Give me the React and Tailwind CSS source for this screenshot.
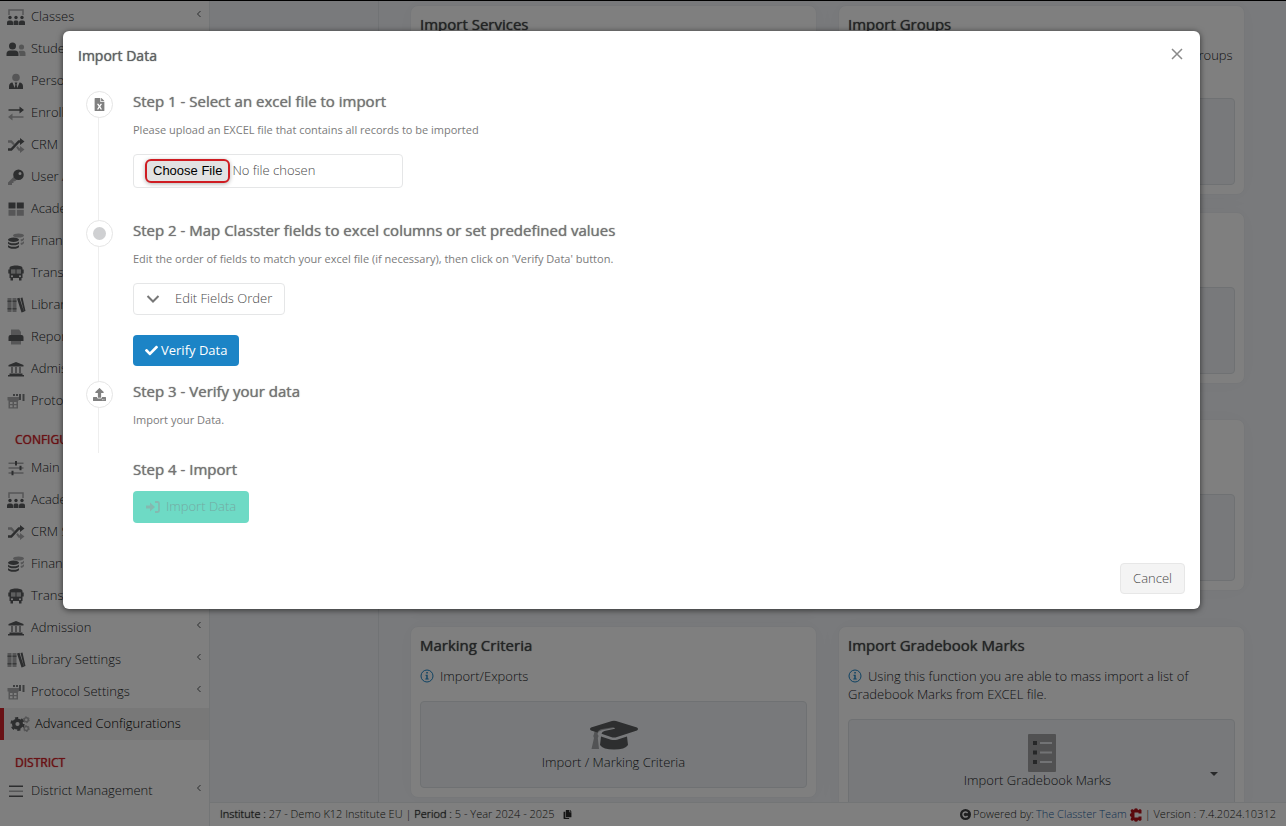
import React, { useState } from 'react';
import { FaCheck, FaCopy, FaFileExcel, FaUpload } from 'react-icons/fa';

// two-tone sidebar icons, the lighter tone is drawn with opacity
const ICONS = {
    classes: (
        <>
            <path d="M3 6V1h14v5" fill="none" stroke="currentColor" strokeWidth="1.5" opacity="0.5" />
            <circle cx="4" cy="8.500" r="1.700" />
            <circle cx="10" cy="8.500" r="1.700" />
            <circle cx="16" cy="8.500" r="1.700" />
            <path d="M1 16v-2.500q0-2 2-2h2q2 0 2 2V16zM7.500 16v-2.500q0-2 1.500-2h2q1.500 0 1.500 2V16zM13 16v-2.500q0-2 2-2h2q2 0 2 2V16z" />
        </>
    ),
    students: (
        <>
            <circle cx="6.500" cy="5" r="3.500" />
            <path d="M0.500 15v-2q0-3.500 3.500-3.500h5q3.500 0 3.500 3.500v2z" />
            <g opacity="0.5">
                <circle cx="15.500" cy="6" r="2.600" />
                <path d="M13.500 15v-2q0-1.500-1-2.500q.500-.700 1.500-.700h3q2.500 0 2.500 2.700v2.500z" />
            </g>
        </>
    ),
    personnel: (
        <>
            <circle cx="10" cy="4.500" r="3.800" opacity="0.5" />
            <path d="M3 16v-2.500Q3 9.800 6.500 9.500l2.200 5.500L9.400 11.500 8.600 9.500h2.800l-.8 2 .7 3.500 2.200-5.500Q17 9.800 17 13.500V16z" />
        </>
    ),
    enroll: (
        <>
            <path d="M2.500 4.200h11V1.500L18 5l-4.500 3.500V5.800h-11z" />
            <path d="M17.500 11.200h-11V8.500L2 12l4.500 3.500v-2.700h11z" opacity="0.5" />
        </>
    ),
    crm: (
        <>
            <path d="M2 11.300h2.800l7.500-8H14V1l4.500 3.500L14 8V5.800h-.700l-7.500 8H2z" />
            <path d="M2 3.300h3.800l3 3.400-1.400 1.500-2.600-2.500H2zM10.200 10.500l1.300-1.500 2 2.300h.500V9l4.500 3.500L14 16v-2.300h-1.400z" opacity="0.5" />
        </>
    ),
    key: (
        <>
            <path d="M2 13.500 8 7.500l3 3-2 1.800H7.500V14H6v2H2z" opacity="0.5" />
            <path fillRule="evenodd" d="M12.500.500a5.300 5.300 0 1 1 0 10.600 5.300 5.300 0 0 1 0-10.600zm1.500 2.500a1.500 1.500 0 1 0 0 3 1.500 1.500 0 0 0 0-3z" />
        </>
    ),
    blocks: (
        <>
            <path d="M2.500 1.500h7v6h-7zM10.800 1.500h7v6h-7z" />
            <path d="M2.500 8.800h7v6h-7zM10.800 8.800h7v6h-7z" opacity="0.5" />
        </>
    ),
    coins: (
        <>
            <ellipse cx="12.500" cy="2.500" rx="5.500" ry="2" opacity="0.5" />
            <path d="M14.500 6.500q3-.500 3.500-2v2q-.500 1.500-3 2zM14.500 10q3-.500 3.500-2v2q-.500 1.500-3 2z" opacity="0.5" />
            <ellipse cx="7.500" cy="6.800" rx="5.500" ry="2.200" />
            <path d="M2 8.500q1 1.800 5.500 1.800T13 8.500v2q-1 1.800-5.500 1.800T2 10.500zM2 12q1 1.800 5.500 1.800T13 12v2q-1 1.800-5.500 1.800T2 14z" />
        </>
    ),
    bus: (
        <>
            <path fillRule="evenodd" d="M10 .500c4 0 6.500 1 6.500 2.500v1.500h1.200v4h-1.200V13H3.500V8.500H2.300v-4h1.200V3C3.500 1.500 6 .500 10 .500zM5 4.500v4h4.500v-4zm5.500 0v4H15v-4zM6 10.200a1 1 0 1 0 0 2 1 1 0 0 0 0-2zm8 0a1 1 0 1 0 0 2 1 1 0 0 0 0-2z" />
            <path d="M5 4.500h10v4H5z" opacity="0.4" />
            <path d="M4.500 13h2.500v2.500H4.500zM13 13h2.500v2.500H13z" />
        </>
    ),
    books: (
        <>
            <path d="M1.500 1h4v14h-4zM6.500 1h4v14h-4z" opacity="0.5" />
            <path d="M1.500 3.500h4V5h-4zM1.500 11h4v1.500h-4zM6.500 3.500h4V5h-4zM6.500 11h4v1.500h-4z" opacity="0.7" />
            <path d="m11 1.500 2.500-.700 4.500 14-2.500.700zM14.500 1l2-.500L19.500 14l-1.500.500z" />
        </>
    ),
    printer: (
        <>
            <path d="M5 0.500h8L15 3v3H5zM5 11h10v4.500H5z" opacity="0.5" />
            <path d="M2.500 8q0-2 2-2h11q2 0 2 2v4h-15z" />
        </>
    ),
    bank: (
        <>
            <path d="M10 1 17.500 4v1.500h-15V4zM2 14h16v1.500H2zM3.500 12.500h13V14h-13z" />
            <path d="M5 6h2v6H5zM9 6h2v6H9zM13 6h2v6h-2z" opacity="0.6" />
        </>
    ),
    protocol: (
        <>
            <path fillRule="evenodd" d="M1.500 4h11.500v3.500H12V15.500H2.500V7.500h-1zM4 9v2h2.500V9zm4 0v2h2.500V9zM4 12.200v2h2.500v-2zm4 0v2h2.500v-2z" opacity="0.5" />
            <path d="M7 1h2v2H7zM10 1h2v2h-2zM13 1h2v6h-2zM16.500 1h2v7h-2z" opacity="0.8" />
        </>
    ),
    sliders: (
        <>
            <path d="M2.500 2.500h15V4h-15zM2.500 7.300h15v1.500h-15zM2.500 12.200h15v1.500h-15z" opacity="0.5" />
            <path d="M9 1h2v4.500H9zM13.500 5.800h2v4.500h-2zM5.500 10.700h2v4.500h-2z" />
        </>
    ),
    bars: (
        <>
            <path d="M3 2.500h14V4H3zM3 12.500h14V14H3z" />
            <path d="M3 7.500h14V9H3z" opacity="0.5" />
        </>
    ),
    cogs: (
        <>
            <circle cx="7.500" cy="8" r="3.800" fill="none" stroke="currentColor" strokeWidth="3.400" />
            <circle cx="7.500" cy="8" r="6" fill="none" stroke="currentColor" strokeWidth="2.200" strokeDasharray="3.100 3.180" />
            <g fill="none" stroke="currentColor" opacity="0.5">
                <circle cx="16.300" cy="3.800" r="2" strokeWidth="1.400" />
                <circle cx="16.300" cy="12.500" r="2" strokeWidth="1.400" />
                <circle cx="16.300" cy="3.800" r="3" strokeWidth="1" strokeDasharray="1.570 1.570" />
                <circle cx="16.300" cy="12.500" r="3" strokeWidth="1" strokeDasharray="1.570 1.570" />
            </g>
        </>
    ),
};

const menu = [
    {
        items: [
            ['classes', 'Classes'],
            ['students', 'Students'],
            ['personnel', 'Personnel'],
            ['enroll', 'Enrollment'],
            ['crm', 'CRM'],
            ['key', 'User Accounts'],
            ['blocks', 'Academic'],
            ['coins', 'Financial'],
            ['bus', 'Transportation'],
            ['books', 'Library'],
            ['printer', 'Reports'],
            ['bank', 'Admission'],
            ['protocol', 'Protocol'],
        ],
    },
    {
        title: 'CONFIGURATION',
        items: [
            ['sliders', 'Main Settings'],
            ['classes', 'Academic Settings'],
            ['crm', 'CRM Settings'],
            ['coins', 'Financial Settings'],
            ['bus', 'Transportation'],
            ['bank', 'Admission'],
            ['books', 'Library Settings'],
            ['protocol', 'Protocol Settings'],
            ['cogs', 'Advanced Configurations'],
        ],
    },
    {
        title: 'DISTRICT',
        items: [['bars', 'District Management']],
    },
];

const cards = [
    { title: 'Import Services', text: 'Using this function you are able to mass import a list of services from EXCEL file.', label: 'Import Services' },
    { title: 'Import Groups', text: 'Using this function you are able to mass import a list of groups from EXCEL file.', label: 'Import Groups' },
    { title: 'Import Subjects', text: 'Using this function you are able to mass import a list of Subjects from EXCEL file.', label: 'Import Subjects' },
    { title: 'Rubrics', text: 'Import/Exports', label: 'Import / Rubrics' },
    { title: 'Import Candidates', text: 'Using this function you are able to mass import a list of Candidates from EXCEL file.', label: 'Import Candidates' },
    { title: 'Marking Scales', text: 'Import/Exports', label: 'Import / Marking Scales' },
    { title: 'Marking Criteria', text: 'Import/Exports', label: 'Import / Marking Criteria', icon: 'cap' },
    { title: 'Import Gradebook Marks', text: 'Using this function you are able to mass import a list of Gradebook Marks from EXCEL file.', label: 'Import Gradebook Marks', dropdown: true },
];

function Sidebar() {
    return (
        <nav className="w-[210px] shrink-0 overflow-hidden border-r border-[#e7eaec] bg-white pt-px">
            {menu.map((group, i) => (
                <div key={i}>
                    {group.title && (
                        <h2 className="pt-[11px] pl-[15px] text-xs leading-6 font-normal text-[#d2232a] [text-shadow:0_0_1px_currentColor]">{group.title}</h2>
                    )}
                    <ul>
                        {group.items.map(([icon, label]) => {
                            const active = icon === 'cogs';
                            return (
                                <li key={label}>
                                    <a
                                        href="#"
                                        className={`flex h-8 items-center gap-[5px] pl-[6px] pr-[7px] whitespace-nowrap ${
                                            active ? 'border-l-4 border-[#d2232a] bg-[#f0f0f0] text-black' : 'text-[#242628]'
                                        }`}
                                    >
                                        <svg viewBox="0 0 20 16" className="h-4 w-5 shrink-0 fill-current text-[#5a5c5e]">{ICONS[icon]}</svg>
                                        <span className="flex-1">{label}</span>
                                        {!active && (
                                            <svg viewBox="0 0 6 8" className="mb-[6px] h-2 w-[6px] fill-none stroke-[#56595b]">
                                                <path d="M4.500 1 1.500 4l3 3" />
                                            </svg>
                                        )}
                                    </a>
                                </li>
                            );
                        })}
                    </ul>
                </div>
            ))}
        </nav>
    );
}

function CapIcon() {
    return (
        <svg viewBox="0 0 48 38" className="h-[38px] w-12 fill-[#5a5c5e]">
            <path d="M1 11.500 22 5q2-.500 4 0l21 6.500q2 1.500 0 3L27 21q-3 1-6 0l-9.500-3.200q.500-2 3-2.800L25 12.800q-.500-1.800-2-1.600L12 13q-4 1-4.500 3.500L1 14.500q-2-1.500 0-3z" />
            <path d="m11 20.500 10 3.200q3 .800 6 0l10-3.200 1 8.500q-3 4.500-14 4.500T10 29z" />
            <path d="M4.500 15.500q1-3 7-4l11.500-1.300q2 0 2 1.600L12.500 14Q8 15 7.500 18q2 2 .300 4L9 33H1.500L4 22q-1.500-2 0-4z" opacity="0.5" />
        </svg>
    );
}

function ListIcon() {
    return (
        <svg viewBox="0 0 28 38" className="h-[38px] w-7">
            <rect width="28" height="38" rx="1" fill="#a2a3a5" />
            <path fill="#4c4e50" d="M5 7h4v4H5zM5 16.500h4v4H5zM5 26h4v4H5z" />
            <path fill="#e5e7ea" d="M12 8h12v2H12zM12 17.500h12v2H12zM12 27h12v2H12z" />
        </svg>
    );
}

function Card({ card }) {
    return (
        <section className="rounded-lg border border-[#eceff3] bg-white p-[9px] shadow-[0_0_24px_rgba(0,0,0,0.03)]">
            <h3 className="text-[15px] leading-[18px] font-normal text-[#484a4c] [text-shadow:0_0_1px_currentColor]">{card.title}</h3>
            <p className="mt-[13px] leading-[18px]">
                <svg viewBox="0 0 14 14" className="mr-[6px] inline h-[14px] w-[14px] align-[-2px]">
                    <circle cx="7" cy="7" r="6" fill="none" stroke="#1c84c6" />
                    <path fill="#1c84c6" d="M6.300 3h1.500v1.500H6.300zM5.500 5.800h2.200v3.600h1v1H5.300v-1h1V6.800h-.8z" />
                </svg>
                {card.text}
            </p>
            <button className="relative mt-4 flex h-[87px] w-full flex-col items-center rounded border border-[#dfe2e6] bg-[#f0f3f6] pt-[14px]">
                {card.icon === 'cap' ? <CapIcon /> : <ListIcon />}
                <span className={`leading-4 ${card.dropdown ? 'pr-2' : ''}`}>{card.label}</span>
                {card.dropdown && (
                    <span className="absolute right-4 bottom-[29px] border-x-4 border-t-4 border-x-transparent border-t-[#505254]" />
                )}
            </button>
        </section>
    );
}

function Footer() {
    return (
        <footer className="flex h-6 shrink-0 items-center justify-between border-t border-[#e7eaec] bg-white px-[10px] text-[11px] whitespace-nowrap text-[#1c1e20]">
            <div className="flex items-center">
                <p>
                    <b className="font-light [text-shadow:0_0_1px_currentColor]">Institute :</b> 27 - Demo K12 Institute EU |{' '}
                    <b className="font-light [text-shadow:0_0_1px_currentColor]">Period :</b> 5 - Year 2024 - 2025
                </p>
                <button className="ml-2 text-[#2a2a2a]" aria-label="Copy">
                    <FaCopy size={9} />
                </button>
            </div>
            <div className="flex items-center gap-[2px]">
                <svg viewBox="0 0 12 12" className="h-[11px] w-[11px]">
                    <circle cx="6" cy="6" r="6" fill="#3c3e40" />
                    <path d="M8.300 4.300a2.800 2.800 0 1 0 0 3.400" fill="none" stroke="#fff" strokeWidth="1.600" />
                </svg>
                <span>Powered by:</span>
                <a href="#" className="text-[#1f649f]">The Classter Team</a>
                <svg viewBox="0 0 14 14" className="h-[14px] w-[14px] fill-[#b5121b]">
                    <path d="M1.500 2.500 3 1l2 1Q5 .300 7 .300T9 2.200l2-1.200 1.500 1v3.500H9.500V4.500h-4v5h4v-1h3V12L11 13l-2-1q0 1.800-2 1.800T5 12l-2 1-1.500-1.500 1-2.500Q.800 8.500.800 7t1.700-2z" />
                </svg>
                <span>| Version : 7.4.2024.10312</span>
            </div>
        </footer>
    );
}

function Step({ icon, title, text, last, className, children }) {
    return (
        <li className="flex">
            <div className="flex w-[55px] shrink-0 flex-col pl-2">
                <span className="flex h-[27px] w-[27px] items-center justify-center rounded-full border border-[#e5e5e5] text-[#808080]">{icon}</span>
                <span className={`ml-3 w-px flex-1 bg-[#eee] ${last ? 'mb-[6px]' : ''}`} />
            </div>
            <div className={className}>
                <h3 className="text-[15px] leading-5 font-normal text-[#747474] [text-shadow:0_0_1px_currentColor]">{title}</h3>
                <p className="mt-[10px] text-[11px] leading-[18px] font-normal text-[#7b7b7b]">{text}</p>
                {children}
            </div>
        </li>
    );
}

function ImportModal({ onClose }) {
    return (
        <div className="absolute inset-0 border-t border-black bg-black/50 pt-[30px] pr-[86px] pl-[63px]">
            <div role="dialog" aria-label="Import Data" className="rounded-md bg-white p-[15px] text-[#484848] shadow-[0_1px_6px_rgba(0,0,0,0.6)]">
                <div className="flex h-[45px] items-start justify-between">
                    <h2 className="text-sm leading-5 font-normal text-[#5e6163] [text-shadow:0_0_1px_currentColor]">Import Data</h2>
                    <button onClick={onClose} aria-label="Close" className="p-[2px]">
                        <svg viewBox="0 0 12 12" className="h-3 w-3 stroke-[#8a8a8a] stroke-[1.5]">
                            <path d="m1 1 10 10M11 1 1 11" />
                        </svg>
                    </button>
                </div>

                <ul>
                    <Step
                        icon={<FaFileExcel size={13} />}
                        title="Step 1 - Select an excel file to import"
                        text="Please upload an EXCEL file that contains all records to be imported"
                        className="pb-8"
                    >
                        <input
                            type="file"
                            aria-label="Excel file"
                            className="mt-[15px] block h-[34px] w-[270px] rounded border border-[#e5e6e7] py-1 pl-[11px] file:mr-[2px] file:h-6 file:rounded-md file:border-2 file:border-solid file:border-[#cf1c22] file:bg-[#e2e2e2] file:px-[6px] file:font-['Liberation_Sans',sans-serif] file:text-[13px] file:font-normal file:text-black file:shadow-[0_1px_4px_rgba(0,0,0,0.3)]"
                        />
                    </Step>
                    <Step
                        icon={<span className="h-[13px] w-[13px] rounded-full bg-[#cfd0d2]" />}
                        title="Step 2 - Map Classter fields to excel columns or set predefined values"
                        text="Edit the order of fields to match your excel file (if necessary), then click on 'Verify Data' button."
                        className="pb-[15px]"
                    >
                        <button className="mt-[15px] flex h-8 items-center gap-[15px] rounded border border-[#e5e6e7] px-3">
                            <svg viewBox="0 0 14 10" className="h-[10px] w-[14px] fill-none stroke-[#777] stroke-2">
                                <path d="m1.500 2 5.500 5.500L12.500 2" />
                            </svg>
                            Edit Fields Order
                        </button>
                        <button className="mt-5 flex h-[31px] items-center gap-[3px] rounded bg-[#1c84c6] px-3 font-normal text-white">
                            <FaCheck size={13} />
                            Verify Data
                        </button>
                    </Step>
                    <Step icon={<FaUpload size={13} />} title="Step 3 - Verify your data" text="Import your Data." className="pb-[30px]" last />
                </ul>

                <div className="pl-[55px]">
                    <h3 className="text-[15px] leading-5 font-normal text-[#747474] [text-shadow:0_0_1px_currentColor]">Step 4 - Import</h3>
                    <button disabled className="mt-3 flex h-8 items-center gap-[6px] rounded bg-[#6edac5] px-[13px] text-[#74aaa2]">
                        <svg viewBox="0 0 14 12" className="h-3 w-[14px] fill-[#84b9b0] stroke-[#84b9b0]">
                            <path d="M0 4.500h4V1.500L9 6l-5 4.500v-3H0z" stroke="none" />
                            <path d="M9 1h2.500Q13 1 13 2.500v7q0 1.500-1.500 1.500H9" fill="none" strokeWidth="1.800" />
                        </svg>
                        Import Data
                    </button>
                </div>

                <div className="mt-10 flex justify-end">
                    <button onClick={onClose} className="h-[31px] rounded border border-[#e7e7e7] bg-[#f4f4f4] px-3">
                        Cancel
                    </button>
                </div>
            </div>
        </div>
    );
}

export default function App() {
    const [open, setOpen] = useState(true);

    return (
        <div className="relative flex h-screen overflow-hidden bg-[#f3f5f9] font-['Open_Sans',sans-serif] text-[13px] font-light text-[#242628]">
            <Sidebar />
            <div className="flex min-w-0 flex-1 flex-col">
                <div className="flex min-h-0 flex-1">
                    <aside className="w-[169px] shrink-0 border-r border-[#e3e6ea]" />
                    <main className="grid flex-1 grid-cols-2 content-start items-start gap-x-[21px] gap-y-[17px] overflow-hidden pt-[5px] pr-[41px] pl-[31px]">
                        {cards.map((card) => (
                            <Card key={card.title} card={card} />
                        ))}
                    </main>
                </div>
                <Footer />
            </div>
            {open && <ImportModal onClose={() => setOpen(false)} />}
        </div>
    );
}
